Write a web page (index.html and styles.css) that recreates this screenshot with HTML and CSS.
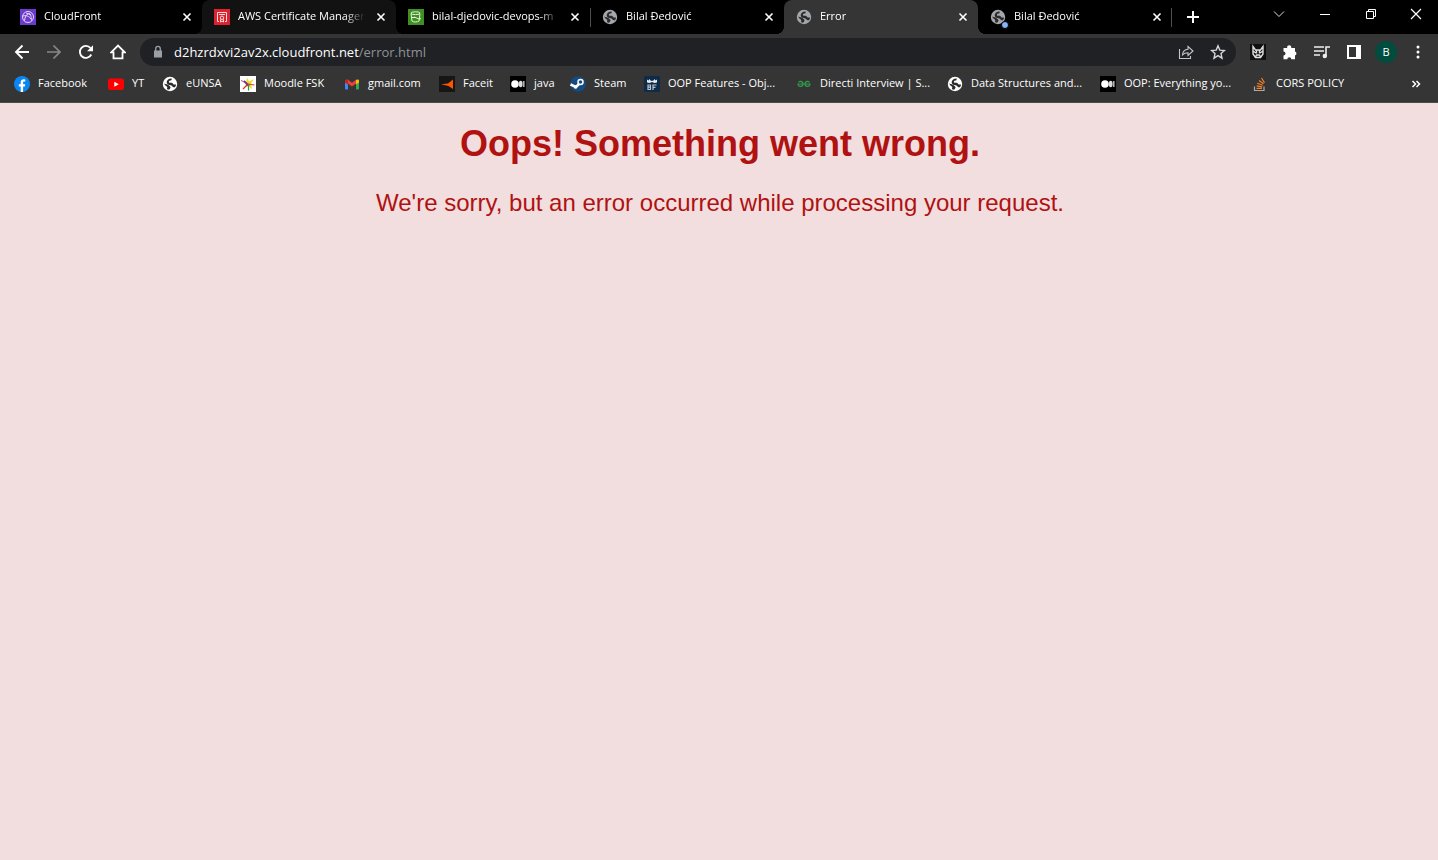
FILE: index.html
```html
<!DOCTYPE html>
<html lang="en">
<head>
<meta charset="utf-8">
<title>Error</title>
<link rel="stylesheet" href="styles.css">
</head>
<body>
<svg class="defs" aria-hidden="true">
  <symbol id="globe" viewBox="0 0 16 16"><circle cx="8" cy="8" r="7.200" fill="currentColor"/><path class="land" d="M9.600 2.400c.3 1.300-.2 2-1.300 2.200-1 .2-1.700.7-1.300 1.700.4.900 1.800.3 2.700.5 1.100.2 1.100 1.400 2 1.700.8.200 1.700-.2 2.400.2-.2 1-.6 1.800-1.100 2.500-1.500.2-2.300-.2-3-1.300-.6-1-2-.6-3.200-1C5 8.300 4.400 7 4.800 5.600c.4-1.700 2-3.400 4.800-3.200z"/><path class="land" d="M2.200 7.600c1.600.6 3.700.8 4.800 1.900.8.800 1.600 1 1.500 2.100-.1 1.200-1.100 1.300-1.300 2.200-.9-.1-1.700-.4-2.300-.9.500-1 .6-1.700-.1-2.300C3.800 9.700 2.600 9.400 2.200 7.600z"/></symbol>
  <symbol id="close" viewBox="0 0 16 16"><path d="M4.500 4.500l7 7m0-7l-7 7" stroke="currentColor" stroke-width="1.600"/></symbol>
  <symbol id="medium" viewBox="0 0 16 16"><path d="M0 0h16v16H0z"/><circle cx="5" cy="8" r="3.800" fill="#fff"/><ellipse cx="10.700" cy="8" rx="1.900" ry="3.300" fill="#ddd"/><path d="M13.800 5v6" stroke="#bbb" stroke-width="1.500"/></symbol>
</svg>

<header class="browser">
  <div class="titlebar">
    <div class="tabs">
      <div class="tab">
        <svg class="icon" viewBox="0 0 16 16"><path fill="#6b3bcb" d="M0 0h16v16H0z"/><g fill="none" stroke="#e3d6ff"><circle cx="8" cy="8" r="5.500"/><path d="M4.500 11.500C5 8 6 5.500 8.500 4.500S11 8 11.500 11.500M3 7c3-1 6 0 8 3M6 4l5 2"/></g></svg>
        <span class="title">CloudFront</span>
        <button class="close" aria-label="Close CloudFront"><svg class="icon"><use href="#close"/></svg></button>
      </div>
      <div class="tab hovered">
        <svg class="icon" viewBox="0 0 16 16"><path fill="#dd222f" d="M0 0h16v16H0z"/><g fill="none" stroke="#ffd9dc"><path d="M5 12.500H3.500v-9h9v9H11M5 5.500h6"/><circle cx="8" cy="8.800" r="1.700"/><path d="M6.500 10.500V13l1.500-1 1.500 1v-2.500"/></g></svg>
        <span class="title">AWS Certificate Manager</span>
        <button class="close" aria-label="Close AWS Certificate Manager"><svg class="icon"><use href="#close"/></svg></button>
      </div>
      <div class="tab">
        <svg class="icon" viewBox="0 0 16 16"><path fill="#3f8f24" d="M0 0h16v16H0z"/><g fill="none" stroke="#e2f6d8"><ellipse cx="7.500" cy="4.200" rx="4.500" ry="1.400"/><path d="M3 4.500l1 7.500c1.500 1.300 5.500 1.300 7 0l1-7.500M6 8l5 2c2 .5 2-.8.500-1.500M4 8.500h3"/></g></svg>
        <span class="title">bilal-djedovic-devops-m</span>
        <button class="close" aria-label="Close bilal-djedovic"><svg class="icon"><use href="#close"/></svg></button>
      </div>
      <div class="tab divided">
        <svg class="icon world"><use href="#globe"/></svg>
        <span class="title">Bilal Đedović</span>
        <button class="close" aria-label="Close Bilal Đedović"><svg class="icon"><use href="#close"/></svg></button>
      </div>
      <div class="tab active">
        <svg class="icon world"><use href="#globe"/></svg>
        <span class="title">Error</span>
        <button class="close" aria-label="Close Error"><svg class="icon"><use href="#close"/></svg></button>
      </div>
      <div class="tab">
        <span class="badged"><svg class="icon world"><use href="#globe"/></svg><i class="badge"></i></span>
        <span class="title">Bilal Đedović</span>
        <button class="close" aria-label="Close Bilal Đedović"><svg class="icon"><use href="#close"/></svg></button>
      </div>
    </div>
    <button class="newtab" aria-label="New tab"><svg class="icon" viewBox="0 0 16 16"><path d="M8 2v12M2 8h12" stroke="#fff" stroke-width="2"/></svg></button>
    <div class="window">
      <button aria-label="Search tabs"><svg class="icon" viewBox="0 0 16 16"><path d="M3 5.500l5 5 5-5" fill="none" stroke="#ddd"/></svg></button>
      <button aria-label="Minimize"><svg class="icon" viewBox="0 0 16 16"><path d="M3 8.500h10" stroke="#fff"/></svg></button>
      <button aria-label="Restore"><svg class="icon" viewBox="0 0 16 16"><path d="M3.500 5.500h7v7h-7zM5.500 5.500v-2h7v7h-2" fill="none" stroke="#fff"/></svg></button>
      <button aria-label="Close window"><svg class="icon" viewBox="0 0 16 16"><path d="M3 3l10 10M13 3L3 13" stroke="#fff" stroke-width="1.200"/></svg></button>
    </div>
  </div>

  <div class="toolbar">
    <nav class="history">
      <button aria-label="Back"><svg class="icon" viewBox="0 0 16 16"><path d="M15 8H2m6.500-6.500L2 8l6.500 6.500" fill="none" stroke="#fff" stroke-width="1.900"/></svg></button>
      <button aria-label="Forward"><svg class="icon" viewBox="0 0 16 16"><path d="M1 8h13M7.500 1.500L14 8l-6.500 6.500" fill="none" stroke="#888" stroke-width="1.700"/></svg></button>
      <button aria-label="Reload"><svg class="icon" viewBox="0 0 16 16"><path d="M13.300 10.500A6 6 0 1 1 12.500 4" fill="none" stroke="#fff" stroke-width="1.900"/><path fill="#fff" d="M15 1.200v6H9z"/></svg></button>
      <button aria-label="Home"><svg class="icon" viewBox="0 0 16 16"><path d="M1.200 8.300L8 1.500l6.800 6.800h-2.300v6h-9v-6z" fill="none" stroke="#fff" stroke-width="1.800"/></svg></button>
    </nav>
    <div class="address">
      <svg class="icon" viewBox="0 0 16 16"><path fill="#9aa0a6" d="M4 6.500h8v7H4z"/><path d="M5.700 7V4.700a2.300 2.300 0 0 1 4.600 0V7" fill="none" stroke="#9aa0a6" stroke-width="1.300"/></svg>
      <span class="url">d2hzrdxvi2av2x.cloudfront.net<span class="path">/error.html</span></span>
      <button aria-label="Share"><svg class="icon" viewBox="0 0 16 16"><path d="M1.500 5v9.500h11V12M4.500 11c.3-4 2.300-5.500 5.500-5.700V2.500L15 7l-5 4.500V8.700c-2.500 0-4 .6-5.500 2.300z" fill="none" stroke="#c4c7ca" stroke-width="1.100"/></svg></button>
      <button aria-label="Bookmark this tab"><svg class="icon" viewBox="0 0 16 16"><path d="M8 1.800l1.800 4.300 4.700.4-3.500 3.100 1 4.600L8 11.700l-4 2.500 1-4.600-3.500-3.100 4.700-.4z" fill="none" stroke="#d5d7d9" stroke-width="1.400"/></svg></button>
    </div>
    <div class="actions">
      <button aria-label="Extension"><svg class="icon" viewBox="0 0 16 16"><path fill="#101010" d="M0 0h16v16H0z"/><path d="M3 2.500V10l2.500 3.500h5L13 10V2.500L10.500 6h-5zM3 7l3 2M13 7l-3 2M6.500 6v3.500M9.500 6v3.500M5.500 13l1-2h3l1 2" fill="none" stroke="#ddd" stroke-width="1.400"/></svg></button>
      <button aria-label="Extensions"><svg class="icon" viewBox="0 0 16 16"><path fill="#fff" d="M1.500 4h3.700a2.100 2.100 0 1 1 4 0H13v3.500a2.100 2.100 0 0 1 0 4V15.200H9.300a2 2 0 0 0-4 0H1.500v-3.700a2 2 0 0 0 0-4z"/></svg></button>
      <button aria-label="Media controls"><svg class="icon" viewBox="0 0 16 16"><path d="M0 3h10M0 7h10M0 11h6M12 12V3h4" fill="none" stroke="#eee" stroke-width="1.600"/><circle cx="10.800" cy="12" r="2.200" fill="#eee"/></svg></button>
      <button aria-label="Side panel"><svg class="icon" viewBox="0 0 16 16"><path d="M2 2h12v12H2z" fill="none" stroke="#fff" stroke-width="2"/><path fill="#fff" d="M10 2h4v12h-4z"/></svg></button>
      <button class="avatar" aria-label="Profile">B</button>
      <button aria-label="Menu"><svg class="icon" viewBox="0 0 16 16"><g fill="#fff"><circle cx="8" cy="3" r="1.500"/><circle cx="8" cy="8" r="1.500"/><circle cx="8" cy="13" r="1.500"/></g></svg></button>
    </div>
  </div>

  <nav class="bookmarks">
    <a href="#"><svg class="icon" viewBox="0 0 16 16"><circle cx="8" cy="8" r="8" fill="#0a86f2"/><path fill="#fff" d="M6.700 16v-5.500H4.800V8.200h1.900V6.500C6.700 4.400 8 3.300 9.800 3.300l1.500.1v2h-1c-.9 0-1.200.5-1.200 1.200v1.600h2.100l-.4 2.300H9.100V16z"/></svg>Facebook</a>
    <a href="#"><svg class="icon" viewBox="0 0 16 16"><rect y="2.500" width="16" height="11.500" rx="2.800" fill="#f00"/><path fill="#fff" d="M6.300 5.800l4.500 2.500-4.500 2.500z"/></svg>YT</a>
    <a href="#"><svg class="icon"><use href="#globe"/></svg>eUNSA</a>
    <a href="#"><svg class="icon" viewBox="0 0 16 16"><path fill="#fff" d="M0 0h16v16H0z"/><path d="M1 4.500l7 3" stroke="#b04ab0"/><path fill="#f0dc20" d="M7 1.500l2 4 5-2.500-3 4.500 1 5.500-4-3-2.500 1z"/><path d="M8 8l6.500 1M8 8l-5 5" stroke="#d33" stroke-width="1.200"/><path d="M4 5l5 5" stroke="#822a8a" stroke-width="1.800"/><path d="M8.500 8v6.500" stroke="#3b8d4b" stroke-width="1.200"/></svg>Moodle FSK</a>
    <a href="#"><svg class="icon" viewBox="0 0 16 16"><path fill="#4285f4" d="M1 4l3 2v7.500H2a1 1 0 0 1-1-1z"/><path fill="#34a853" d="M15 4l-3 2v7.500h2a1 1 0 0 0 1-1z"/><path d="M2.500 4.500L8 8.700l5.500-4.200" fill="none" stroke="#ea4335" stroke-width="3"/><path fill="#fbbc04" d="M12 4.500c1.500-1.500 3-1.300 3 .5v1.500l-3 2z"/><path fill="#c5221f" d="M4 4.500C2.500 3 1 3.200 1 5v1.500l3 2z"/></svg>gmail.com</a>
    <a href="#"><svg class="icon" viewBox="0 0 16 16"><path fill="#161616" d="M0 0h16v16H0z"/><path fill="#ff5500" d="M2 8.200l7-.7L14 3.500v9.500L9.500 10z"/></svg>Faceit</a>
    <a href="#"><svg class="icon"><use href="#medium"/></svg>java</a>
    <a href="#"><svg class="icon" viewBox="0 0 16 16"><circle cx="8" cy="8" r="7.800" fill="#164b82"/><path d="M.5 8.500L6 11l4-4" fill="none" stroke="#fff" stroke-width="2.500"/><circle cx="10.500" cy="6" r="2.500" fill="#164b82" stroke="#fff" stroke-width="1.500"/><circle cx="5.500" cy="11" r="1.800" fill="#fff"/></svg>Steam</a>
    <a href="#"><svg class="icon" viewBox="0 0 16 16"><path fill="#0e2c48" d="M0 0h16v16H0z"/><path fill="#e5e9ee" d="M3 6.500V3.500l1.500 1 1-1.500 1 1.500L8 5l1.500-.5 1-1.500 1 1.500 1.500-1v3L10.500 7 8 6l-2.500 1z"/><path d="M4 9h2.500v4.500H4zM4 11.200h2.500M12.500 9H9v5M9 11.300h2.500" fill="none" stroke="#b9c2cc" stroke-width="1.200"/></svg>OOP Features - Obj...</a>
    <a href="#"><svg class="icon" viewBox="0 0 16 16"><path d="M2.500 6.200c2-1.500 4.500-.5 4.500 1.800 0 3-4.500 3.500-5 0h12c-.5 3.500-5 3-5 0 0-2.300 2.500-3.300 4.500-1.800" fill="none" stroke="#2f9e4b" stroke-width="1.200"/></svg>Directi Interview | S...</a>
    <a href="#"><svg class="icon"><use href="#globe"/></svg>Data Structures and...</a>
    <a href="#"><svg class="icon"><use href="#medium"/></svg>OOP: Everything yo...</a>
    <a href="#"><svg class="icon" viewBox="0 0 16 16"><path d="M2.500 10.500v4H12v-4" fill="none" stroke="#aaa" stroke-width="1.200"/><path d="M4.500 12.300H10M4.700 9.800l5.500 1M5.200 7.200l5.500 2M7 4.500l4.500 3.300M9.500 2l3 4.800" stroke="#f48024" stroke-width="1.200"/></svg>CORS POLICY</a>
    <button class="more" aria-label="More bookmarks"><svg class="icon" viewBox="0 0 16 16"><path d="M4.500 5l3 3-3 3M8.500 5l3 3-3 3" fill="none" stroke="#fff" stroke-width="1.500"/></svg></button>
  </nav>
</header>

<main class="page">
  <h1>Oops! Something went wrong.</h1>
  <p>We're sorry, but an error occurred while processing your request.</p>
</main>
</body>
</html>
```
FILE: styles.css
```css
* { box-sizing: border-box; }

body {
  margin: 0;
  min-height: 100vh;
  background: #f2dede;
  font-family: "Liberation Sans", Arial, sans-serif;
}

button {
  display: flex;
  align-items: center;
  justify-content: center;
  padding: 0;
  border: 0;
  background: none;
  color: #fff;
  font: inherit;
}

.defs { position: absolute; width: 0; height: 0; }
.icon { display: block; flex: none; width: 16px; height: 16px; }
.land { fill: #2b2b2b; }

.browser {
  background: #353535;
  border-bottom: 1px solid #4a4a4a;
  color: #fff;
  font-family: "Open Sans", "Noto Sans", sans-serif;
  font-size: 11px;
  line-height: 14px;
}

.titlebar {
  display: flex;
  height: 34px;
  padding-left: 8px;
  background: #000;
}

.tabs {
  display: flex;
  flex: 0 1 1164px;
  min-width: 0;
  background: linear-gradient(#505050, #505050) 100% 8px / 1px 19px no-repeat;
}

.tab {
  position: relative;
  display: flex;
  flex: 1 1 0;
  align-items: center;
  gap: 8px;
  min-width: 0;
  padding: 0 7px 0 12px;
  border-radius: 8px 8px 0 0;
}

.tab.hovered { background: #121212; color: #fff; --ear: #121212; }
.tab.active { background: #353535; --ear: #353535; }
.tab.divided { background: linear-gradient(#505050, #505050) 0 8px / 1px 19px no-repeat; }

/* Curved feet where a raised tab meets the toolbar */
.tab.hovered::before,
.tab.hovered::after,
.tab.active::before,
.tab.active::after {
  content: "";
  position: absolute;
  bottom: 0;
  width: 8px;
  height: 8px;
}
.tab.hovered::before,
.tab.active::before {
  right: 100%;
  background: radial-gradient(circle at 0 0, transparent 8px, var(--ear) 8px);
}
.tab.hovered::after,
.tab.active::after {
  left: 100%;
  background: radial-gradient(circle at 100% 0, transparent 8px, var(--ear) 8px);
}

.title {
  flex: 1;
  padding-bottom: 2px;
  overflow: hidden;
  white-space: nowrap;
  mask-image: linear-gradient(to right, #000 calc(100% - 20px), transparent);
}

.world { color: #a4a8ad; }
.badged { position: relative; }
.badge {
  position: absolute;
  right: -3px;
  bottom: -4px;
  width: 8px;
  height: 8px;
  border: 1px solid #000;
  border-radius: 50%;
  background: #8ab4f8;
}

.newtab { width: 42px; }
.window { display: flex; height: 28px; margin-left: auto; }
.window button { width: 46px; }
.window button:last-child { width: 44px; }

.toolbar { display: flex; align-items: center; height: 36px; }
.history { display: flex; gap: 16px; padding: 0 14px; }

.address {
  display: flex;
  flex: 1;
  align-items: center;
  gap: 16px;
  min-width: 0;
  height: 28px;
  padding: 0 10px;
  border-radius: 14px;
  background: #202124;
}

.url { flex: 1; margin-left: -8px; font-size: 13px; line-height: 18px; white-space: nowrap; }
.path { color: #8e9297; }

.actions { display: flex; align-items: center; gap: 16px; padding: 0 12px 0 14px; }
.avatar {
  width: 22px;
  height: 22px;
  margin: 0 -3px;
  border-radius: 50%;
  background: #004d40;
}

.bookmarks {
  display: grid;
  grid-template-columns: 94px 54px 78px 104px 95px 71px 60px 74px 152px 151px 153px 152px 1fr auto;
  align-items: center;
  height: 32px;
  padding: 0 14px 4px;
}

.bookmarks a {
  display: flex;
  align-items: flex-start;
  gap: 8px;
  color: #fff;
  text-decoration: none;
  white-space: nowrap;
}

.page { padding-left: 2px; color: #b01212; text-align: center; }
.page h1 { margin: 20px 0; font-size: 36px; line-height: 42px; }
.page p { margin: 24px 0; font-size: 24px; line-height: 28px; }
```
